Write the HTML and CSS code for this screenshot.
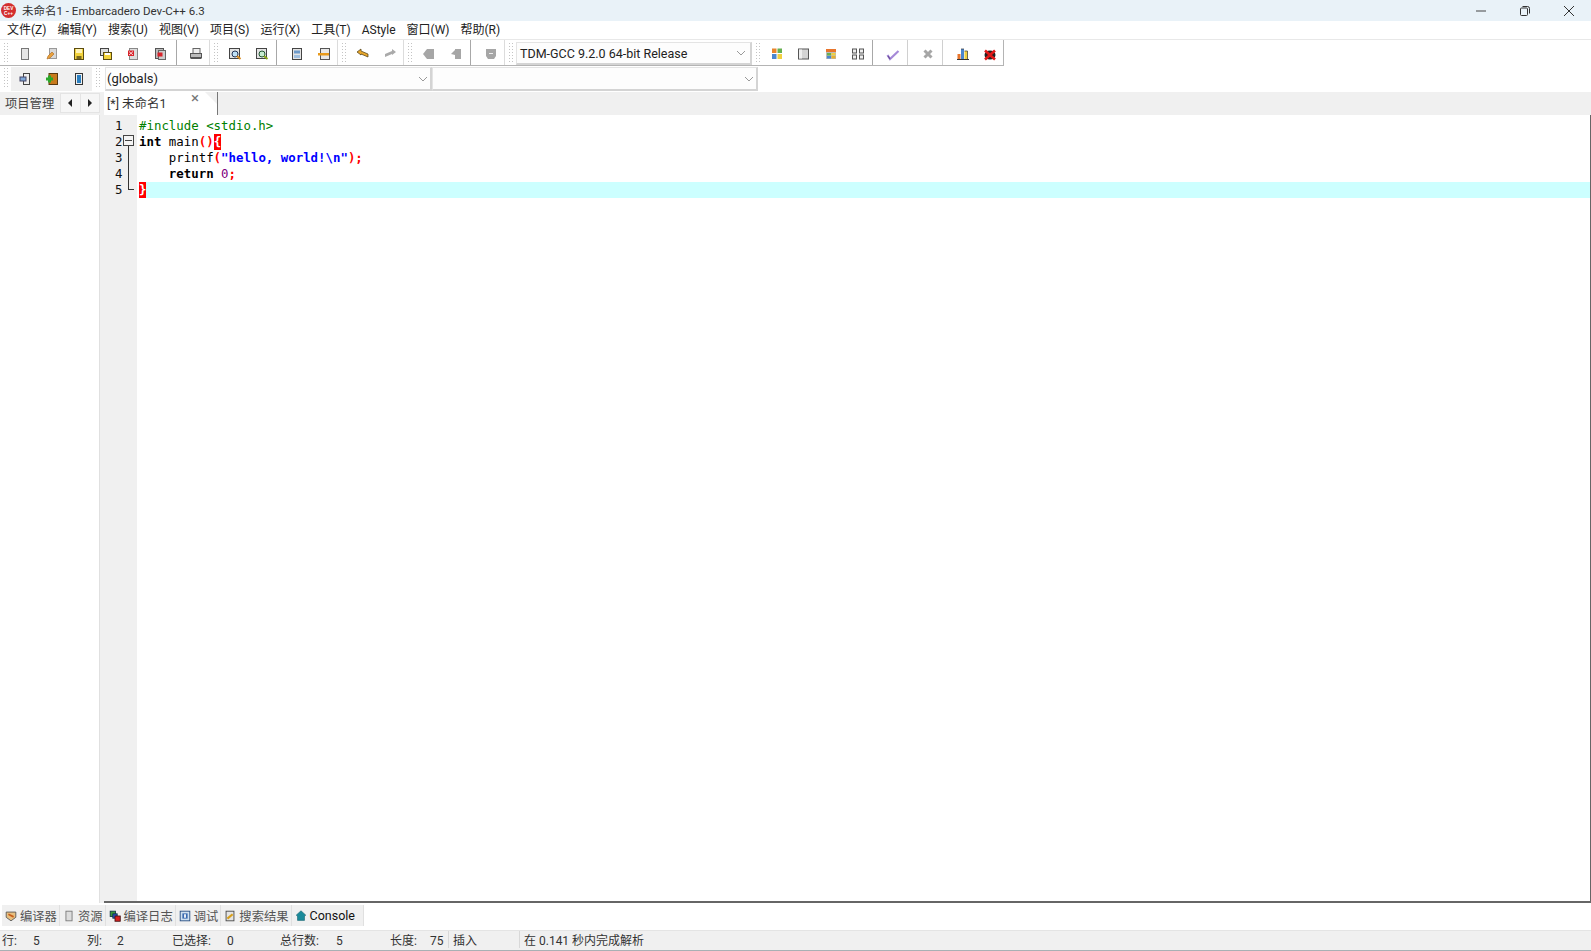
FILE: index.html
```html
<!DOCTYPE html>
<html lang="zh-CN">
<head>
    <meta charset="UTF-8">
    <title>未命名1 - Embarcadero Dev-C++ 6.3</title>
    <link rel="stylesheet" href="styles.css">
</head>
<body>

<svg class="sprite" xmlns="http://www.w3.org/2000/svg">
    <symbol id="i-new" viewBox="0 0 16 16"><rect x="4.500" y="2.500" width="7" height="11" fill="#e6e6e6" stroke="#777"/></symbol>
    <symbol id="i-open" viewBox="0 0 16 16"><rect x="5.500" y="2.500" width="7" height="10" fill="#d8d8d8" stroke="#999"/><path d="M3 13l1-3 4-4 2 2-4 4z" fill="#e9a13c" stroke="#a8641c" stroke-width=".6"/></symbol>
    <symbol id="i-save" viewBox="0 0 16 16"><rect x="3.500" y="2.500" width="9" height="11" fill="#f3d33c" stroke="#5c4c10"/><rect x="5" y="3" width="6" height="4" fill="#fff4b8"/><rect x="5.500" y="10" width="5" height="3" fill="#7a6a20"/></symbol>
    <symbol id="i-saveall" viewBox="0 0 16 16"><rect x="2.500" y="2.500" width="8" height="7" fill="#ddd" stroke="#444"/><rect x="5.500" y="6.500" width="8" height="7" fill="#f3d33c" stroke="#5c4c10"/><rect x="7" y="7" width="5" height="2" fill="#fff"/></symbol>
    <symbol id="i-close" viewBox="0 0 16 16"><rect x="4.500" y="2.500" width="8" height="11" fill="#ddd" stroke="#888"/><rect x="3" y="4.500" width="6" height="5.500" fill="#d8232a"/><path d="M4 5.500l4 3.500M8 5.500l-4 3.500" stroke="#fff" stroke-width=".8"/></symbol>
    <symbol id="i-closeall" viewBox="0 0 16 16"><rect x="3.500" y="2.500" width="8" height="10" fill="#bbb" stroke="#555"/><rect x="6.500" y="4.500" width="7" height="9" fill="#ccc" stroke="#666"/><rect x="5.500" y="6.500" width="5" height="4" fill="#d8232a"/></symbol>
    <symbol id="i-print" viewBox="0 0 16 16"><rect x="5" y="2.500" width="7" height="5" fill="#eee" stroke="#666"/><rect x="2.500" y="7.500" width="11" height="4" fill="#bbb" stroke="#555"/><rect x="2.500" y="11.500" width="11" height="1.500" fill="#555"/></symbol>
    <symbol id="i-find" viewBox="0 0 16 16"><rect x="2.500" y="2.500" width="10" height="10" fill="#e4e4e4" stroke="#444"/><circle cx="8" cy="8" r="3" fill="#bfe0f5" stroke="#235"/><path d="M10 10l3.500 3" stroke="#d88a1c" stroke-width="2"/></symbol>
    <symbol id="i-find2" viewBox="0 0 16 16"><rect x="2.500" y="2.500" width="10" height="10" fill="#e4e4e4" stroke="#444"/><circle cx="8" cy="8" r="3" fill="#c6ecd0" stroke="#253"/><path d="M10 10l3.500 3" stroke="#8aa81c" stroke-width="2"/></symbol>
    <symbol id="i-goto" viewBox="0 0 16 16"><rect x="3.500" y="2.500" width="9" height="11" fill="#e4e4e4" stroke="#444"/><rect x="5" y="4.500" width="6" height="3" fill="#6d9ac9"/><rect x="5" y="9" width="6" height="3" fill="#9fbfdf"/></symbol>
    <symbol id="i-indent" viewBox="0 0 16 16"><rect x="4.500" y="2.500" width="9" height="11" fill="#e8e8e8" stroke="#555"/><rect x="2" y="7" width="11" height="2.500" fill="#e89a1c"/></symbol>
    <symbol id="i-undo" viewBox="0 0 16 16"><path d="M2 6l4-3v2l7 3v3l-7-3v1z" fill="#e8a72c" stroke="#4a3a10" stroke-width=".7"/></symbol>
    <symbol id="i-redo" viewBox="0 0 16 16"><path d="M14 6l-4-3v2l-7 3v3l7-3v1z" fill="#aaa"/></symbol>
    <symbol id="i-bm1" viewBox="0 0 16 16"><path d="M2 8l4-5h7v10H6z" fill="#a6a6a6"/></symbol>
    <symbol id="i-bm2" viewBox="0 0 16 16"><path d="M3 8l4-4v-1h6v10H7V9z" fill="#a6a6a6"/></symbol>
    <symbol id="i-shield" viewBox="0 0 16 16"><path d="M3 3h10v7l-2 3H5l-2-3z" fill="#a6a6a6"/><rect x="6" y="7" width="4" height="1" fill="#eee"/></symbol>
    <symbol id="i-grid" viewBox="0 0 16 16"><rect x="3" y="2.500" width="4.500" height="4.500" fill="#e8852c"/><rect x="8.500" y="2.500" width="4.500" height="4.500" fill="#66b050"/><rect x="3" y="8" width="4.500" height="5" fill="#4a86d0"/><rect x="8.500" y="8" width="4.500" height="5" fill="#f0d040"/></symbol>
    <symbol id="i-window" viewBox="0 0 16 16"><rect x="2.500" y="3" width="10" height="10" fill="#d4d4d4" stroke="#555"/><rect x="3" y="3.500" width="3" height="9" fill="#eee"/></symbol>
    <symbol id="i-colors" viewBox="0 0 16 16"><rect x="3" y="3" width="10" height="10" fill="#bbb"/><rect x="3" y="3" width="10" height="3" fill="#e8752c"/><rect x="4" y="7" width="4" height="2.500" fill="#66b050"/><rect x="8.500" y="7" width="4" height="2.500" fill="#f0d040"/><rect x="4" y="10" width="4" height="2.500" fill="#4a86d0"/><rect x="8.500" y="10" width="4" height="2.500" fill="#e8b030"/></symbol>
    <symbol id="i-outline" viewBox="0 0 16 16"><g fill="#eee" stroke="#555"><rect x="2.500" y="3" width="4" height="4"/><rect x="9.500" y="3" width="4" height="4"/><rect x="2.500" y="9" width="4" height="4"/><rect x="9.500" y="9" width="4" height="4"/></g></symbol>
    <symbol id="i-check" viewBox="0 0 16 16"><path d="M2.500 9l2.500 4 8.500-8" fill="none" stroke="#a68ad8" stroke-width="2.200"/><path d="M3 10l2 3" stroke="#6a4a98" stroke-width="1.200"/></symbol>
    <symbol id="i-stop" viewBox="0 0 16 16"><path d="M4.500 4.500l7 7M11.500 4.500l-7 7" stroke="#a6a6a6" stroke-width="3"/></symbol>
    <symbol id="i-chart" viewBox="0 0 16 16"><rect x="2.500" y="8" width="3" height="5" fill="#e8752c"/><rect x="6" y="3" width="3" height="10" fill="#4a86d0"/><rect x="9.500" y="5" width="3" height="8" fill="#f0d040"/><path d="M2 13.500h12" stroke="#333"/><path d="M6 3h3M9.500 5h3v8" fill="none" stroke="#333" stroke-width=".7"/></symbol>
    <symbol id="i-bug" viewBox="0 0 16 16"><ellipse cx="8" cy="9" rx="5.500" ry="4.500" fill="#222"/><path d="M3 4.500l10 9M13 4.500l-10 9" stroke="#e01818" stroke-width="2.600"/></symbol>
    <symbol id="i-project" viewBox="0 0 16 16"><rect x="6.500" y="2.500" width="6" height="11" fill="#eee" stroke="#444"/><rect x="3" y="6" width="6" height="4" fill="#7fa8d8" stroke="#446"/></symbol>
    <symbol id="i-addfile" viewBox="0 0 16 16"><rect x="5" y="2.500" width="8.500" height="11" fill="#c87a1c" stroke="#5a3a10"/><path d="M2 8h7M5.500 4.500v7" stroke="#2aa82a" stroke-width="3"/></symbol>
    <symbol id="i-book" viewBox="0 0 16 16"><rect x="4.500" y="2.500" width="7" height="11" fill="#eee" stroke="#333"/><rect x="6" y="4" width="4" height="8" fill="#2a7fc0"/></symbol>
    <symbol id="i-compiler" viewBox="0 0 16 16"><path d="M2.500 3.500h11v6l-5.500 4-5.500-4z" fill="#e8c080" stroke="#555"/><path d="M5 6l6 3" stroke="#c8601c" stroke-width="2"/></symbol>
    <symbol id="i-res" viewBox="0 0 16 16"><rect x="4.500" y="2.500" width="7" height="11" fill="#ddd" stroke="#777"/></symbol>
    <symbol id="i-log" viewBox="0 0 16 16"><rect x="2.500" y="2.500" width="6" height="6" fill="#3a9a3a" stroke="#134"/><rect x="5.500" y="5.500" width="5" height="5" fill="#2a50c0" stroke="#134"/><rect x="8" y="8" width="6" height="6" fill="#d82020" stroke="#411"/></symbol>
    <symbol id="i-debug" viewBox="0 0 16 16"><rect x="2.500" y="2.500" width="11" height="11" fill="#cfe0f0" stroke="#234a80"/><rect x="5" y="5" width="6" height="6" fill="#3a6ab0"/><rect x="7" y="6" width="2" height="4" fill="#fff"/></symbol>
    <symbol id="i-search" viewBox="0 0 16 16"><rect x="3.500" y="2.500" width="9" height="11" fill="#e4e4e4" stroke="#444"/><path d="M5 11l6-5" stroke="#d8a01c" stroke-width="2.500"/></symbol>
    <symbol id="i-console" viewBox="0 0 16 16"><path d="M8 2l5.500 5-1.500 1v5H4V8L2.500 7z" fill="#1a8a9a" stroke="#0f5a68" stroke-width=".6"/></symbol>
</svg>

<div class="titlebar">
    <svg class="logo" viewBox="0 0 16 16" width="15" height="15"><circle cx="8" cy="8" r="8" fill="#d32f2f"/><text x="8" y="7.500" class="logo-text">DEV</text><text x="8" y="12.500" class="logo-text">C++</text></svg>
    <span class="title-text">未命名1 - Embarcadero Dev-C++ 6.3</span>
    <div class="win-btns">
        <div class="win-btn"><svg width="12" height="12" viewBox="0 0 12 12"><path d="M1 6h10" stroke="#444"/></svg></div>
        <div class="win-btn"><svg width="12" height="12" viewBox="0 0 12 12"><rect x="1.500" y="3" width="7" height="7.500" rx="1" fill="none" stroke="#333"/><path d="M3.500 1.500h5a2 2 0 0 1 2 2v5" fill="none" stroke="#333"/></svg></div>
        <div class="win-btn"><svg width="12" height="12" viewBox="0 0 12 12"><path d="M1 1l10 10M11 1L1 11" stroke="#333"/></svg></div>
    </div>
</div>

<div class="menubar">
    <span class="menu-item">文件(Z)</span>
    <span class="menu-item">编辑(Y)</span>
    <span class="menu-item">搜索(U)</span>
    <span class="menu-item">视图(V)</span>
    <span class="menu-item">项目(S)</span>
    <span class="menu-item">运行(X)</span>
    <span class="menu-item">工具(T)</span>
    <span class="menu-item">AStyle</span>
    <span class="menu-item">窗口(W)</span>
    <span class="menu-item">帮助(R)</span>
</div>

<div class="toolrow">
    <div class="toolstrip toolstrip-main">
        <div class="tool-group">
            <i class="gripper"></i>
            <span class="tool"><svg><use href="#i-new"/></svg></span>
            <span class="tool"><svg><use href="#i-open"/></svg></span>
            <span class="tool"><svg><use href="#i-save"/></svg></span>
            <span class="tool"><svg><use href="#i-saveall"/></svg></span>
            <span class="tool"><svg><use href="#i-close"/></svg></span>
            <span class="tool"><svg><use href="#i-closeall"/></svg></span>
            <i class="sep sep-wide"></i>
            <span class="tool"><svg><use href="#i-print"/></svg></span>
        </div>
        <div class="tool-group">
            <i class="gripper"></i>
            <span class="tool"><svg><use href="#i-find"/></svg></span>
            <span class="tool"><svg><use href="#i-find2"/></svg></span>
            <i class="sep"></i>
            <span class="tool"><svg><use href="#i-goto"/></svg></span>
            <span class="tool"><svg><use href="#i-indent"/></svg></span>
        </div>
        <div class="tool-group">
            <i class="gripper"></i>
            <span class="tool"><svg><use href="#i-undo"/></svg></span>
            <span class="tool"><svg><use href="#i-redo"/></svg></span>
        </div>
        <div class="tool-group">
            <i class="gripper"></i>
            <span class="tool"><svg><use href="#i-bm1"/></svg></span>
            <span class="tool"><svg><use href="#i-bm2"/></svg></span>
            <i class="sep"></i>
            <span class="tool"><svg><use href="#i-shield"/></svg></span>
        </div>
        <div class="tool-group tool-group-combo">
            <i class="gripper"></i>
            <div class="combo combo-compiler">
                <span>TDM-GCC 9.2.0 64-bit Release</span>
                <svg class="chevron" width="10" height="6" viewBox="0 0 10 6"><path d="M1 1l4 4 4-4" fill="none" stroke="#999"/></svg>
            </div>
        </div>
        <div class="tool-group tool-group-last">
            <i class="gripper"></i>
            <span class="tool"><svg><use href="#i-grid"/></svg></span>
            <span class="tool"><svg><use href="#i-window"/></svg></span>
            <span class="tool"><svg><use href="#i-colors"/></svg></span>
            <span class="tool"><svg><use href="#i-outline"/></svg></span>
            <i class="sep"></i>
            <span class="tool"><svg><use href="#i-check"/></svg></span>
            <i class="sep sep-light"></i>
            <span class="tool"><svg><use href="#i-stop"/></svg></span>
            <i class="sep sep-light"></i>
            <span class="tool"><svg><use href="#i-chart"/></svg></span>
            <span class="tool"><svg><use href="#i-bug"/></svg></span>
        </div>
    </div>
</div>

<div class="toolrow toolrow-second">
    <div class="toolstrip toolstrip-second">
        <i class="gripper"></i>
        <div class="project-tools">
            <span class="tool"><svg><use href="#i-project"/></svg></span>
            <span class="tool"><svg><use href="#i-addfile"/></svg></span>
            <span class="tool"><svg><use href="#i-book"/></svg></span>
        </div>
        <i class="gripper gripper-second"></i>
        <div class="combo combo-scope">
            <span>(globals)</span>
            <svg class="chevron" width="10" height="6" viewBox="0 0 10 6"><path d="M1 1l4 4 4-4" fill="none" stroke="#999"/></svg>
        </div>
        <div class="combo combo-scope">
            <span></span>
            <svg class="chevron" width="10" height="6" viewBox="0 0 10 6"><path d="M1 1l4 4 4-4" fill="none" stroke="#999"/></svg>
        </div>
    </div>
</div>

<div class="tabrow">
    <div class="side-head">
        <span class="side-title">项目管理</span>
        <div class="arrows">
            <span class="arrow"><svg width="6" height="8" viewBox="0 0 6 8"><path d="M5 0v8L1 4z" fill="#222"/></svg></span>
            <span class="arrow"><svg width="6" height="8" viewBox="0 0 6 8"><path d="M1 0v8l4-4z" fill="#222"/></svg></span>
        </div>
    </div>
    <div class="file-tab">
        <span>[*] 未命名1</span>
        <span class="tab-close">×</span>
        <i class="dog-ear"></i>
    </div>
</div>

<div class="main">
    <div class="side-panel"></div>
    <div class="editor">
        <div class="fold-box"><i></i></div>
        <div class="fold-line"></div>
        <div class="code-line"><span class="ln">1</span><span class="code"><span class="c-pre">#include &lt;stdio.h&gt;</span></span></div>
        <div class="code-line"><span class="ln">2</span><span class="code"><b class="c-kw">int</b> main<span class="c-br">()</span><span class="c-match">{</span></span></div>
        <div class="code-line"><span class="ln">3</span><span class="code">    printf<span class="c-br">(</span><b class="c-str">"hello, world!\n"</b><span class="c-br">);</span></span></div>
        <div class="code-line"><span class="ln">4</span><span class="code">    <b class="c-kw">return</b> <span class="c-num">0</span><span class="c-br">;</span></span></div>
        <div class="code-line code-line-active"><span class="ln">5</span><span class="code"><span class="c-match">}</span></span></div>
    </div>
</div>

<div class="bottom-tabs">
    <span class="b-tab"><svg><use href="#i-compiler"/></svg>编译器</span>
    <span class="b-tab"><svg><use href="#i-res"/></svg>资源</span>
    <span class="b-tab"><svg><use href="#i-log"/></svg>编译日志</span>
    <span class="b-tab"><svg><use href="#i-debug"/></svg>调试</span>
    <span class="b-tab"><svg><use href="#i-search"/></svg>搜索结果</span>
    <span class="b-tab b-tab-active"><svg><use href="#i-console"/></svg>Console</span>
</div>

<div class="statusbar">
    <span class="stat stat-line"><span class="stat-label">行:</span><span>5</span></span>
    <span class="stat stat-col"><span class="stat-label">列:</span><span>2</span></span>
    <span class="stat stat-sel"><span class="stat-label">已选择:</span><span>0</span></span>
    <span class="stat stat-total"><span class="stat-label">总行数:</span><span>5</span></span>
    <span class="stat stat-len"><span class="stat-label">长度:</span><span>75</span></span>
    <span class="stat stat-mode">插入</span>
    <span class="stat stat-parse">在 0.141 秒内完成解析</span>
</div>

</body>
</html>
```

FILE: styles.css
```css
* {
    box-sizing: border-box;
}

body {
    margin: 0;
    height: 100vh;
    overflow: hidden;
    display: flex;
    flex-direction: column;
    background-color: #fff;
    font-family: Roboto, "Noto Sans CJK SC", sans-serif;
    font-size: 12px;
    color: #222;
}

.sprite {
    display: none;
}

/* title bar */
.titlebar {
    height: 21px;
    flex: none;
    display: flex;
    align-items: center;
    background-color: #e9f2f8;
    padding-left: 1px;
}

.logo {
    margin-right: 6px;
}

.logo-text {
    font-family: "Liberation Sans", sans-serif;
    font-size: 5px;
    font-weight: bold;
    fill: #fff;
    text-anchor: middle;
}

.title-text {
    font-size: 11.5px;
    color: #333;
    padding-bottom: 2px;
}

.win-btns {
    margin-left: auto;
    display: flex;
}

.win-btn {
    width: 44px;
    height: 21px;
    display: flex;
    align-items: center;
    justify-content: center;
}

/* menu */
.menubar {
    height: 19px;
    flex: none;
    display: flex;
    align-items: baseline;
    padding-left: 7px;
    gap: 11px;
    border-bottom: 1px solid #e8e8e8;
}

.menu-item {
    font-size: 12px;
    line-height: 18px;
    color: #222;
}

/* toolbars */
.toolrow {
    height: 26px;
    flex: none;
}

.toolstrip {
    display: flex;
    height: 100%;
}

.toolstrip-main {
    width: 1004px;
    border-bottom: 1px solid #b4b4b4;
}

.toolstrip-second {
    width: 758px;
    padding-left: 3px;
    padding-top: 1px;
    padding-bottom: 1px;
}

.tool-group {
    display: flex;
    align-items: center;
    padding-left: 3px;
    border-right: 1px solid #dcdcdc;
}

.tool-group-combo {
    border-right: none;
    width: 247px;
}

.tool-group-last {
    border-right-color: #b4b4b4;
}

.gripper {
    width: 6px;
    height: 22px;
    margin-right: 2px;
    flex: none;
    background-image: radial-gradient(#c4c4c4 1px, transparent 1px);
    background-size: 3px 3px;
}

.gripper-second {
    margin-left: 3px;
    margin-right: 4px;
}

.tool {
    width: 27px;
    height: 24px;
    flex: none;
    display: flex;
    align-items: center;
    justify-content: center;
    padding-top: 2px;
}

.project-tools .tool {
    padding-top: 0;
}

.tool svg {
    width: 16px;
    height: 16px;
}

.sep {
    width: 1px;
    height: 100%;
    flex: none;
    margin: 0 6px 0 1px;
    background-color: #a8a8a8;
}

.sep-wide {
    margin: 0 5px 0 3px;
}

.sep-light {
    background-color: #d0d0d0;
}

.project-tools {
    display: flex;
    background-color: #f0f0f0;
    height: 100%;
}

.combo {
    display: flex;
    align-items: center;
    justify-content: space-between;
    background-color: #fdfdfd;
    border: 1px solid #e4e4e4;
    border-bottom: 2px solid #d4d4d4;
    border-right: 2px solid #d4d4d4;
    color: #222;
}

.combo-compiler {
    width: 236px;
    height: 23px;
    margin-top: 2px;
    padding: 0 4px 0 3px;
    font-size: 12.5px;
}

.combo-scope {
    width: 327px;
    padding: 0 2px 0 1px;
    font-size: 13px;
}

/* tab row */
.tabrow {
    height: 23px;
    flex: none;
    display: flex;
    background-color: #f0f0f0;
}

.side-head {
    width: 104px;
    display: flex;
    align-items: center;
    padding: 0 0 2px 5px;
}

.side-title {
    width: 55px;
    font-size: 12.3px;
    color: #444;
}

.arrows {
    display: flex;
    width: 40px;
    height: 20px;
    border: 1px solid #e4e4e4;
    background-color: #f6f6f6;
}

.arrow {
    flex: 1;
    display: flex;
    align-items: center;
    justify-content: center;
}

.arrow + .arrow {
    border-left: 1px solid #e4e4e4;
}

.file-tab {
    width: 114px;
    position: relative;
    display: flex;
    align-items: center;
    padding: 0 0 3px 3px;
    background-color: #fff;
    border-right: 1px solid #777;
    font-size: 12.5px;
    color: #333;
}

.tab-close {
    position: absolute;
    left: 87px;
    top: -3px;
    font-size: 15px;
    color: #777;
}

.dog-ear {
    position: absolute;
    top: 0;
    right: 0;
    border-style: solid;
    border-width: 0 12px 12px 0;
    border-color: transparent #f0f0f0 transparent transparent;
}

/* main area */
.main {
    flex: 1;
    min-height: 0;
    display: flex;
    background-color: #f0f0f0;
}

.side-panel {
    width: 100px;
    background-color: #fff;
    border-right: 1px solid #e0e0e0;
    margin-right: 4px;
}

.editor {
    flex: 1;
    position: relative;
    padding-top: 3px;
    border-bottom: 2px solid #666;
    border-right: 1px solid #666;
    background-image: linear-gradient(to right, #f0f0f0 33px, #fff 33px);
    font-family: "DejaVu Sans Mono", monospace;
    font-size: 12.4px;
    color: #000;
}

.code-line {
    height: 16px;
    line-height: 15px;
    display: flex;
    white-space: pre;
}

.code-line-active .code {
    background-color: #ccffff;
}

.ln {
    width: 35px;
    flex: none;
    padding-left: 11px;
    color: #111;
}

.code {
    flex: 1;
}

.c-pre {
    color: #008000;
}

.c-kw {
    font-weight: bold;
}

.c-br {
    color: #f00;
    font-weight: bold;
}

.c-str {
    color: #00f;
}

.c-num {
    color: #800080;
}

.c-match {
    display: inline-block;
    height: 16px;
    vertical-align: top;
    background-color: #f00;
    color: #fff;
    font-weight: bold;
}

.fold-box {
    position: absolute;
    left: 19px;
    top: 20px;
    width: 11px;
    height: 11px;
    background-color: #f4f4f4;
    border: 1px solid #444;
}

.fold-box i {
    position: absolute;
    left: 1px;
    top: 4px;
    width: 7px;
    height: 1px;
    background-color: #444;
}

.fold-line {
    position: absolute;
    left: 24px;
    top: 31px;
    width: 6px;
    height: 44px;
    border-left: 1px solid #333;
    border-bottom: 1px solid #333;
}

/* bottom */
.bottom-tabs {
    height: 28px;
    flex: none;
    display: flex;
    align-items: flex-start;
    padding: 2px 0 0 2px;
    border-bottom: 1px solid #e4e4e4;
}

.b-tab {
    height: 21px;
    display: flex;
    align-items: center;
    gap: 2px;
    padding: 0 2px;
    background-color: #f0f0f0;
    border-right: 1px solid #e0e0e0;
    font-size: 12.3px;
    color: #555;
}

.b-tab svg {
    width: 14px;
    height: 14px;
    flex: none;
}

.b-tab-active {
    color: #111;
    padding-right: 8px;
    font-size: 12.5px;
}

.statusbar {
    height: 20px;
    flex: none;
    display: flex;
    align-items: center;
    padding: 0 0 2px 2px;
    background-color: #f0f0f0;
    border-bottom: 1px solid #a8b0b4;
    font-size: 12px;
    color: #333;
}

.stat {
    display: flex;
    flex: none;
    align-items: baseline;
}

.stat-line {
    width: 85px;
}

.stat-line .stat-label {
    width: 31px;
}

.stat-col {
    width: 85px;
}

.stat-col .stat-label {
    width: 30px;
}

.stat-sel {
    width: 108px;
}

.stat-sel .stat-label {
    width: 55px;
}

.stat-total {
    width: 110px;
}

.stat-total .stat-label {
    width: 56px;
}

.stat-len {
    width: 58px;
}

.stat-len .stat-label {
    width: 40px;
}

.stat-mode {
    width: 71px;
    padding-left: 4px;
    border-left: 1px solid #d8d8d8;
}

.stat-parse {
    padding-left: 4px;
    border-left: 1px solid #d8d8d8;
}
```
